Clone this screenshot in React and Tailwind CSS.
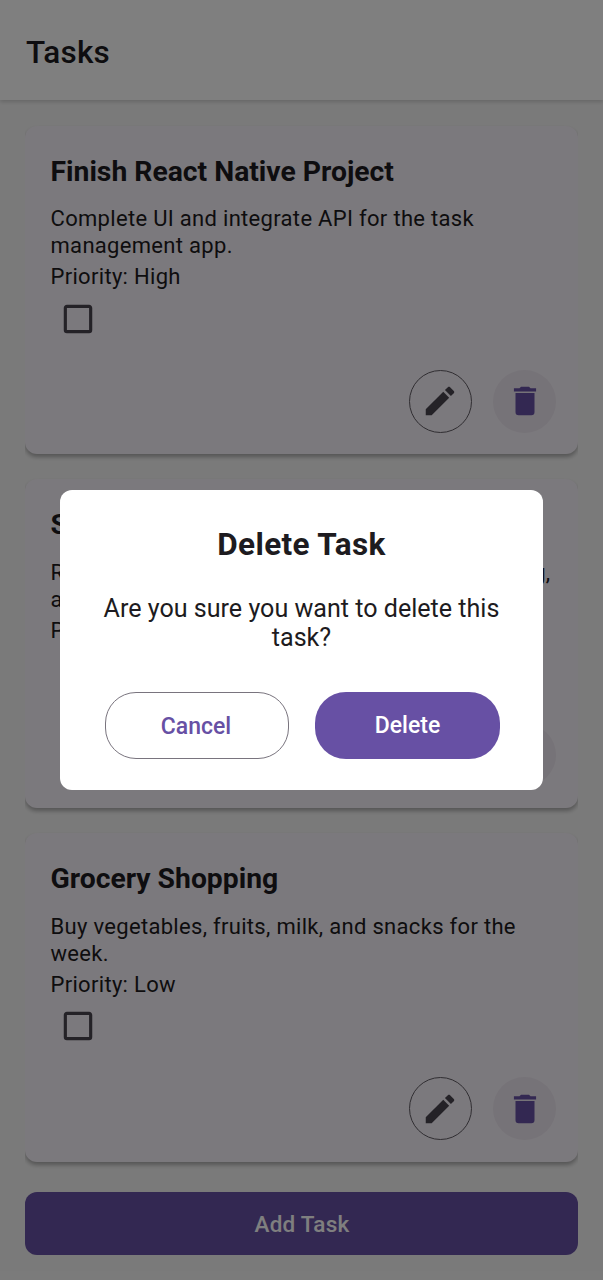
import React from "react";

const tasks = [
  {
    title: "Finish React Native Project",
    lines: ["Complete UI and integrate API for the task", "management app."],
    priority: "High",
  },
  {
    title: "Study for Exams",
    lines: ["Revise all the chapters, practice problem solving,", "and algorithms."],
    priority: "Medium",
    justified: true,
  },
  {
    title: "Grocery Shopping",
    lines: ["Buy vegetables, fruits, milk, and snacks for the", "week."],
    priority: "Low",
  },
];

const icons = {
  pencil:
    "M20.71,7.04C21.1,6.65 21.1,6 20.71,5.63L18.37,3.29C18,2.9 17.35,2.9 16.96,3.29L15.12,5.12L18.87,8.87M3,17.25V21H6.75L17.81,9.93L14.06,6.18L3,17.25Z",
  trash:
    "M19,4H15.5L14.5,3H9.5L8.5,4H5V6H19M6,19A2,2 0 0,0 8,21H16A2,2 0 0,0 18,19V7H6V19Z",
  checkbox:
    "M19,3H5C3.89,3 3,3.89 3,5V19A2,2 0 0,0 5,21H19A2,2 0 0,0 21,19V5C21,3.89 20.1,3 19,3M19,5V19H5V5H19Z",
};

function Icon({ name, className }) {
  return (
    <svg viewBox="0 0 24 24" className={`size-[38px] ${className}`} fill="currentColor">
      <path d={icons[name]} />
    </svg>
  );
}

function TaskCard({ title, lines, priority, justified }) {
  return (
    <li className="overflow-x-clip">
      <article className="flex h-[328.6px] flex-col rounded-xl bg-[#f7f2fa] px-[25.5px] pt-[25.2px] pb-[21.5px] shadow-[0_3px_4px_rgba(0,0,0,0.3)]">
        <h2 className="text-[28.3px] leading-[42px] font-bold whitespace-nowrap text-[#1d1b20]">{title}</h2>
        <div className="mt-[12.4px] text-[22px] leading-[27px] tracking-[0.31px] whitespace-nowrap">
          <p className={justified ? "w-[500px] whitespace-normal [text-align-last:justify]" : ""}>{lines[0]}</p>
          <p>{lines[1]}</p>
        </div>
        <p className="mt-1 text-[22px] leading-[27px] tracking-[0.31px]">Priority: {priority}</p>
        <button className="mt-[9.8px] ml-[8.8px] w-fit">
          <Icon name="checkbox" className="block text-[#49454f]" />
        </button>
        <div className="mt-auto flex justify-end gap-[21.6px]">
          <button className="flex size-[62.8px] items-center justify-center rounded-full border-[1.5px] border-[#605c64]">
            <Icon name="pencil" className="text-[#49454f]" />
          </button>
          <button className="-mr-[3.5px] flex size-[62.8px] items-center justify-center rounded-full bg-[#ece6f0]">
            <Icon name="trash" className="text-[#6750a4]" />
          </button>
        </div>
      </article>
    </li>
  );
}

function DeleteDialog() {
  return (
    <div className="absolute inset-0 flex items-center justify-center bg-black/50">
      <div
        role="dialog"
        className="flex h-[300px] w-[483px] flex-col items-center rounded-xl bg-white px-[44px] pt-[35px] text-center text-[#1d1b20]"
      >
        <h2 className="text-[31.5px] leading-[40px] font-bold tracking-[0.35px]">Delete Task</h2>
        <p className="mt-[29px] text-[25.1px] leading-[29px] whitespace-nowrap">
          Are you sure you want to delete this
          <br />
          task?
        </p>
        <div className="mt-[40px] -mr-px flex w-full justify-between">
          <button className="h-[67px] w-[184px] rounded-[31px] border-[1.5px] border-[#79747e] pt-[3px] pr-px text-[23px] font-medium text-[#6750a4]">
            Cancel
          </button>
          <button className="h-[67px] w-[185px] rounded-[31px] bg-[#6750a4] pt-0.5 pl-px text-[23px] font-medium text-white">
            Delete
          </button>
        </div>
      </div>
    </div>
  );
}

export default function App() {
  return (
    <div className="relative flex h-[1280px] w-[603px] flex-col overflow-hidden bg-[#f5f5f5] font-['Roboto',sans-serif] text-[#1d1b20]">
      <header className="flex h-[100px] shrink-0 items-center bg-white px-[26px] pt-[5px] shadow-[0_2px_4px_rgba(0,0,0,0.16)]">
        <h1 className="text-[31.5px] font-medium tracking-[0.2px]">Tasks</h1>
      </header>
      <main className="flex flex-1 flex-col px-[25px] pt-[25.5px]">
        <ul className="flex flex-col gap-[25.2px]">
          {tasks.map((task) => (
            <TaskCard key={task.title} {...task} />
          ))}
        </ul>
        <button className="mt-[30px] h-[63px] shrink-0 rounded-xl bg-[#6750a4] pt-1 pl-px text-[22.5px] font-medium tracking-[0.25px] text-white">
          Add Task
        </button>
      </main>
      <DeleteDialog />
    </div>
  );
}
